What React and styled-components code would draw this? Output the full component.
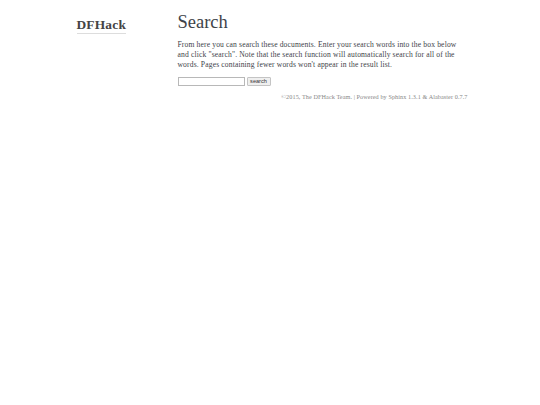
import React from "react";
import styled, { createGlobalStyle } from "styled-components";

const GlobalStyle = createGlobalStyle`
  html, body {
    margin: 0;
    padding: 0;
    background: #fff;
  }
  body {
    font-family: "Liberation Serif", "DejaVu Serif", serif;
    font-size: 7.6px;
    color: #3e4349;
  }
`;

const Document = styled.div`
  width: 395px;
  margin: 0 auto;
  padding-top: 9px;
  display: flex;
  align-items: flex-start;
`;

const Sidebar = styled.div`
  width: 92px;
  flex: none;
  padding: 8px 4px;
  box-sizing: border-box;
`;

const Logo = styled.a`
  display: inline-block;
  font-family: "Liberation Serif", serif;
  font-weight: bold;
  font-size: 13.4px;
  color: #444;
  text-decoration: none;
  border-bottom: 1px solid #ddd;
  line-height: 16px;
  letter-spacing: 0.2px;
`;

const Body = styled.div`
  flex: 1;
  padding: 0 9px 0 13px;
`;

const Title = styled.h1`
  margin: 0 0 5px;
  font-family: "Liberation Serif", serif;
  font-weight: normal;
  font-size: 18.5px;
  line-height: 26px;
  color: #3e4349;
`;

const Text = styled.p`
  margin: 0 0 7px;
  line-height: 10px;
  letter-spacing: 0.14px;
`;

const SearchForm = styled.form`
  display: flex;
  align-items: center;
  gap: 2px;
  margin: 0;
`;

const SearchInput = styled.input`
  width: 67px;
  height: 9px;
  box-sizing: border-box;
  border: 1px solid #b8b8b8;
  padding: 0;
  font-size: 6px;
`;

const SearchButton = styled.button`
  height: 9px;
  width: 24px;
  box-sizing: border-box;
  padding: 0;
  border: 1px solid #c4c4c4;
  border-radius: 1px;
  background: #efefef;
  font-family: "Liberation Sans", Arial, sans-serif;
  font-size: 5.6px;
  line-height: 7px;
  color: #333;
`;

const Footer = styled.div`
  width: 395px;
  margin: 7px auto 0;
  text-align: right;
  font-size: 6.2px;
  color: #888;
  letter-spacing: 0.08px;
`;

const FooterLink = styled.a`
  color: #888;
  text-decoration: underline;
`;

export default function App() {
  return (
    <>
      <GlobalStyle />
      <Document>
        <Sidebar>
          <Logo href="#">DFHack</Logo>
        </Sidebar>
        <Body>
          <Title>Search</Title>
          <Text>
            From here you can search these documents. Enter your search words
            into the box below and click "search". Note that the search
            function will automatically search for all of the words. Pages
            containing fewer words won't appear in the result list.
          </Text>
          <SearchForm onSubmit={(e) => e.preventDefault()}>
            <SearchInput type="text" />
            <SearchButton type="submit">search</SearchButton>
          </SearchForm>
        </Body>
      </Document>
      <Footer>
        ©2015, The DFHack Team. | Powered by{" "}
        <FooterLink href="#">Sphinx 1.3.1</FooterLink> &amp;{" "}
        <FooterLink href="#">Alabaster 0.7.7</FooterLink>
      </Footer>
    </>
  );
}
